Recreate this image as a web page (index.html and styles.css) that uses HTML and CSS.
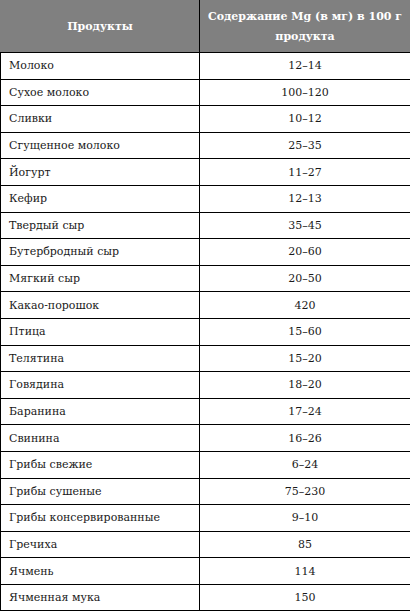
FILE: index.html
```html
<!DOCTYPE html>
<html lang="ru">
<head>
<meta charset="utf-8">
<link rel="stylesheet" href="styles.css">
</head>
<body>
<table class="mg-table">
  <colgroup><col class="col-name"><col class="col-val"></colgroup>
  <thead>
    <tr class="head-row">
      <th>Продукты</th>
      <th>Содержание Mg (в мг) в 100 г продукта</th>
    </tr>
  </thead>
  <tbody>
    <tr><td>Молоко</td><td>12–14</td></tr>
    <tr><td>Сухое молоко</td><td>100–120</td></tr>
    <tr><td>Сливки</td><td>10–12</td></tr>
    <tr><td>Сгущенное молоко</td><td>25–35</td></tr>
    <tr><td>Йогурт</td><td>11–27</td></tr>
    <tr><td>Кефир</td><td>12–13</td></tr>
    <tr><td>Твердый сыр</td><td>35–45</td></tr>
    <tr><td>Бутербродный сыр</td><td>20–60</td></tr>
    <tr><td>Мягкий сыр</td><td>20–50</td></tr>
    <tr><td>Какао-порошок</td><td>420</td></tr>
    <tr><td>Птица</td><td>15–60</td></tr>
    <tr><td>Телятина</td><td>15–20</td></tr>
    <tr><td>Говядина</td><td>18–20</td></tr>
    <tr><td>Баранина</td><td>17–24</td></tr>
    <tr><td>Свинина</td><td>16–26</td></tr>
    <tr><td>Грибы свежие</td><td>6–24</td></tr>
    <tr><td>Грибы сушеные</td><td>75–230</td></tr>
    <tr><td>Грибы консервированные</td><td>9–10</td></tr>
    <tr><td>Гречиха</td><td>85</td></tr>
    <tr><td>Ячмень</td><td>114</td></tr>
    <tr><td>Ячменная мука</td><td>150</td></tr>
  </tbody>
</table>
</body>
</html>
```
FILE: styles.css
```css
html, body {
  margin: 0;
  padding: 0;
  background: #ffffff;
}
.mg-table {
  width: 410px;
  border-collapse: collapse;
  table-layout: fixed;
  font-family: "DejaVu Serif", "Liberation Serif", serif;
  font-size: 11px;
  color: #1a1a1a;
}
.col-name { width: 199px; }
.col-val { width: 211px; }
.mg-table th,
.mg-table td {
  border: 1px solid #000;
  padding: 0 8px;
  vertical-align: middle;
}
.head-row th {
  background: #808080;
  color: #ffffff;
  font-weight: bold;
  text-align: center;
  height: 51px;
  line-height: 20px;
  padding: 0 3px;
  border-top-color: #808080;
  border-left-color: #808080;
}
.mg-table td {
  height: 25.6px;
}
.mg-table td:nth-child(2) {
  text-align: center;
}
```
